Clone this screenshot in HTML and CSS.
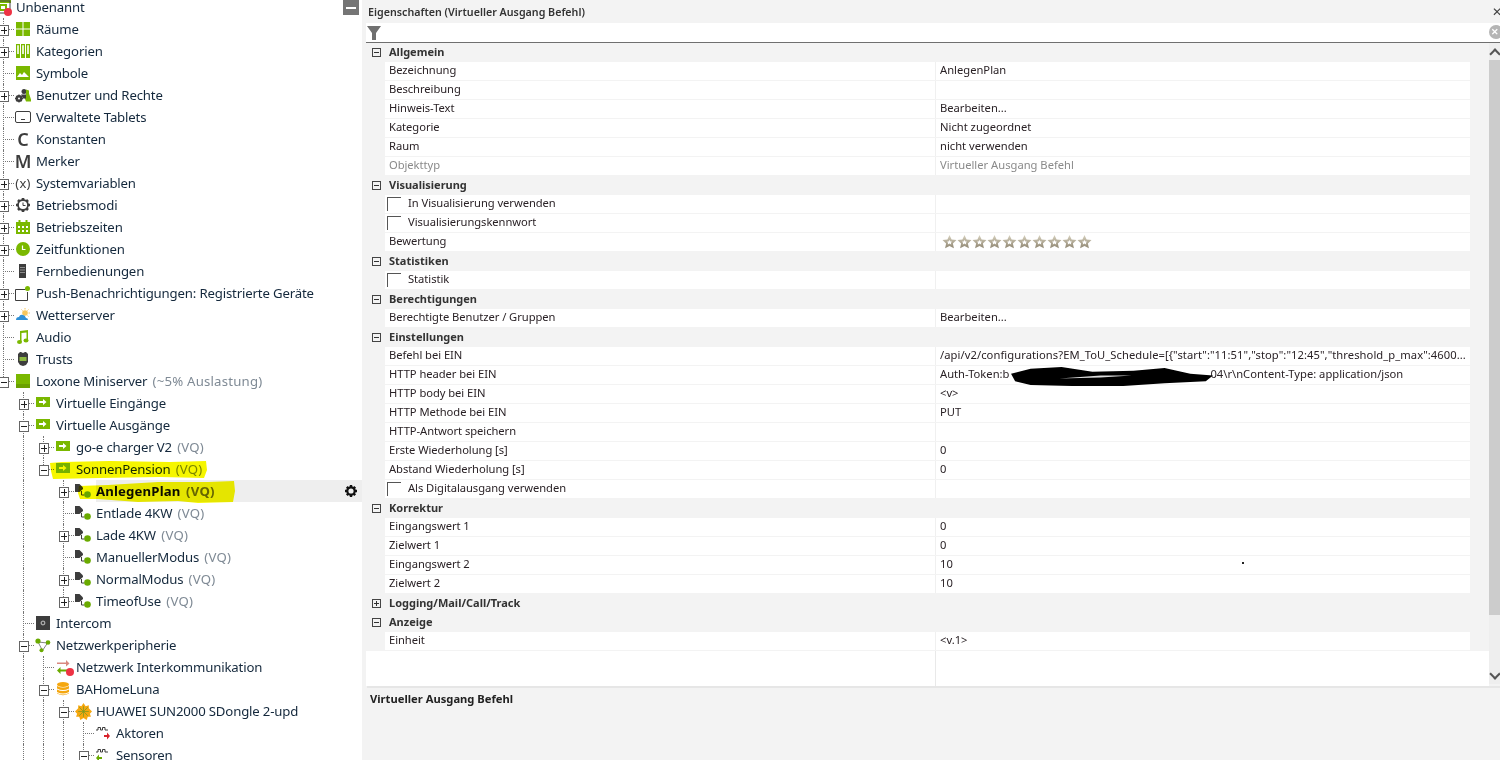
FILE: index.html
```html
<!DOCTYPE html>
<html lang="de">
<head>
<meta charset="utf-8">
<title>Eigenschaften</title>
<link rel="stylesheet" href="styles.css">
</head>
<body>
<svg class="sprites" width="0" height="0" aria-hidden="true">
  <defs><linearGradient id="star-fill" x1="0" y1="0" x2="0" y2="1"><stop offset="0" stop-color="#d8d2bf"/><stop offset="1" stop-color="#8f8672"/></linearGradient></defs>
  <symbol id="i-root" viewBox="0 0 14 14"><rect x="0" y="0" width="14" height="3" fill="#7ab800"/><rect x="1" y="1" width="12" height="12" fill="none" stroke="#444" stroke-width="1"/><rect x="3" y="5" width="6" height="5" fill="none" stroke="#7ab800" stroke-width="2"/></symbol>
  <symbol id="i-rooms" viewBox="0 0 14 14"><path fill="#7ab800" d="M0 0h6.500v6.500H0zM7.500 0H14v6.500H7.500zM0 7.500h6.500V14H0zM7.500 7.500H14V14H7.500z"/></symbol>
  <symbol id="i-cat" viewBox="0 0 14 14"><path fill="none" stroke="#7ab800" stroke-width="1.200" d="M.6.600h2.800v12.800H.6zM5.600.600h2.800v12.800H5.600zM10.600.600h2.800v12.800h-2.800z"/><path fill="#7ab800" d="M.6 10h2.800v3.400H.6zM5.600 10h2.800v3.400H5.600zM10.600 10h2.800v3.400h-2.800z"/></symbol>
  <symbol id="i-sym" viewBox="0 0 14 14"><rect width="14" height="14" fill="#7ab800"/><path fill="#fff" d="M1 11l3-4 2 2 2-3 2 2 3 3z"/></symbol>
  <symbol id="i-users" viewBox="0 0 16 14"><circle cx="9" cy="3" r="2.500" fill="#3d3d3d"/><path fill="#7ab800" d="M11 1l3 1v3l2 6v2h-5l-2-5 2-2z"/><path fill="#3d3d3d" d="M6 6h5v4H8z"/><circle cx="4" cy="10" r="2.600" fill="none" stroke="#3d3d3d" stroke-width="2"/><path stroke="#3d3d3d" stroke-width="1.200" d="M4 6v8M0 10h8M1.500 7.500l5 5M6.500 7.500l-5 5"/><circle cx="4" cy="10" r="1" fill="#fff"/></symbol>
  <symbol id="i-tablet" viewBox="0 0 16 12"><rect x=".5" y=".5" width="15" height="11" rx="1.500" fill="#fff" stroke="#3d3d3d"/><path stroke="#3d3d3d" d="M6 8.500h4"/></symbol>
  <symbol id="i-clockgear" viewBox="0 0 14 14"><path stroke="#3d3d3d" stroke-width="2.600" d="M7 0v14M0 7h14M2 2l10 10M12 2L2 12"/><circle cx="7" cy="7" r="5" fill="#fff" stroke="#3d3d3d" stroke-width="1.800"/><path fill="none" stroke="#3d3d3d" d="M7 4.500v3h2.500"/></symbol>
  <symbol id="i-cal" viewBox="0 0 14 14"><path fill="#7ab800" d="M0 2h14v12H0zM2.500 0h2v3h-2zM9.500 0h2v3h-2z"/><path fill="#fff" d="M2 6h2v2H2zM6 6h2v2H6zM10 6h2v2h-2zM2 10h2v2H2zM6 10h2v2H6zM10 10h2v2h-2z"/></symbol>
  <symbol id="i-clock" viewBox="0 0 14 14"><circle cx="7" cy="7" r="7" fill="#7ab800"/><path fill="none" stroke="#fff" stroke-width="1.200" d="M6.500 3.500v4h3"/></symbol>
  <symbol id="i-remote" viewBox="0 0 14 14"><rect x="3" y="0" width="7" height="14" fill="#3d3d3d"/><path fill="#ddd" d="M4.500 3h1v1h-1zM6.500 3h1v1h-1zM8.500 3h.5v1h-.5zM4.500 5.500h1v1h-1zM6.500 5.500h1v1h-1zM8.500 5.500h.5v1h-.5zM4.500 8h1v1h-1zM6.500 8h1v1h-1zM8.500 8h.5v1h-.5z"/></symbol>
  <symbol id="i-push" viewBox="0 0 16 15"><path fill="none" stroke="#3d3d3d" d="M.5 3.500h10M.5 3.500v11h12V6"/><circle cx="12.500" cy="2.500" r="2.500" fill="#7ab800"/></symbol>
  <symbol id="i-weather" viewBox="0 0 14 14"><circle cx="9" cy="5" r="2.800" fill="#f7c65b"/><path stroke="#f7c65b" d="M9 0v1.500M14 5h-1.500M12.500 1.500l-1 1M12.500 8.500l-1-1M5.500 1.500l1 1"/><path fill="#2f8fd6" d="M0 12q0-3 3-3 1-3 4-2 2 0 3 3 2 0 2 2z"/></symbol>
  <symbol id="i-audio" viewBox="0 0 14 14"><path fill="#7ab800" d="M4 1l8-1v10h-1.500V2.500L5.500 3v9H4z"/><ellipse cx="3.500" cy="12" rx="2.500" ry="2" fill="#7ab800"/><ellipse cx="10" cy="10.500" rx="2.500" ry="2" fill="#7ab800"/></symbol>
  <symbol id="i-trust" viewBox="0 0 14 14"><path fill="#3d3d3d" d="M2 2l2-2h1l2 1 2-1h1l2 2v8l-2 3-3 1-3-1-2-3z"/><rect x="3.500" y="5" width="7" height="4" fill="#8cb840"/></symbol>
  <symbol id="i-ms" viewBox="0 0 14 14"><rect width="14" height="14" fill="#7ab800"/><rect y="10" width="14" height="4" fill="#6aa000"/></symbol>
  <symbol id="i-vq" viewBox="0 0 14 10"><rect width="14" height="10" fill="#7ab800"/><path fill="#fff" d="M3 4h4V2l3.500 3L7 8V6H3z"/></symbol>
  <symbol id="i-cmd" viewBox="0 0 16 14"><path fill="#3d3d3d" d="M0 0h4.500L8 3.500V5L4.500 8H0z"/><path fill="none" stroke="#3d3d3d" d="M6.500 7v4h3"/><circle cx="12.500" cy="10.500" r="3.300" fill="#6aaa00"/></symbol>
  <symbol id="i-intercom" viewBox="0 0 14 14"><rect width="14" height="14" fill="#3d3d3d"/><circle cx="7" cy="7" r="1.800" fill="none" stroke="#aaa" stroke-width="1.300"/></symbol>
  <symbol id="i-net" viewBox="0 0 16 14"><path fill="none" stroke="#666" stroke-width=".8" d="M3 3.500l4.500 8.500 5-7.500z"/><circle cx="3" cy="2.500" r="2.600" fill="#6aaa00"/><circle cx="13" cy="4" r="2.300" fill="#6aaa00"/><circle cx="6.500" cy="11.800" r="2" fill="#6aaa00"/></symbol>
  <symbol id="i-inter" viewBox="0 0 14 14"><path fill="#d98880" d="M1 2.500h9V0l3.500 3.500L10 6.500V4H1z"/><path fill="#6aaa00" d="M13 9.500H4.500V7L1 10.500 4.500 14v-2.500H13z"/></symbol>
  <symbol id="i-db" viewBox="0 0 14 14"><ellipse cx="7" cy="2.500" rx="6" ry="2.500" fill="#f5a70f"/><path fill="#f5a70f" d="M1 4q6 3 12 0v2.500q-6 3-12 0zM1 7.500q6 3 12 0V10q-6 3-12 0zM1 11q6 3 12 0v.5q-6 3.500-12 0z"/></symbol>
  <symbol id="i-huawei" viewBox="0 0 16 16"><path fill="#f5a70f" d="M8 0l2 3 3-1 0 3 3 3-2 2 1 3-3 0-1 3-3-2-3 2-1-3-3 0 1-3-2-2 3-3 0-3 3 1z"/><path stroke="#7a9a20" stroke-width=".7" d="M4 4l8 8M12 4l-8 8M8 3v10M3 8h10"/></symbol>
  <symbol id="i-act" viewBox="0 0 14 14"><path fill="none" stroke="#3d3d3d" d="M0 4h2V1.500h2.500V4h2V1.500h2.500V4H12"/><path fill="#d8212a" d="M8 9h3V6.500L14 10l-3 3.500V11H8z"/></symbol>
  <symbol id="i-sen" viewBox="0 0 14 14"><path fill="none" stroke="#3d3d3d" d="M0 4h2V1.500h2.500V4h2V1.500h2.500V4H12"/><path fill="#6aaa00" d="M6 9H3V6.500L0 10l3 3.500V11h3z"/></symbol>
  <symbol id="i-dot" viewBox="0 0 10 10"><circle cx="5" cy="5" r="4" fill="#ee3344"/></symbol>
  <symbol id="i-gear" viewBox="0 0 14 14"><path stroke="#111" stroke-width="2.400" d="M7 1v12M1 7h12M2.800 2.800l8.400 8.400M11.200 2.800l-8.400 8.400"/><circle cx="7" cy="7" r="3.700" fill="#eee" stroke="#111" stroke-width="2.200"/></symbol>
  <symbol id="i-star" viewBox="0 0 14 14"><path fill="url(#star-fill)" fill-rule="evenodd" d="M7 0l2.100 4.500 4.900.6-3.600 3.300 1 4.900L7 10.900 2.600 13.300l1-4.900L0 5.100l4.900-.6zM7 5L6 6.500l-1.600.2 1.200 1.100-.3 1.600L7 8.600l1.700.8-.3-1.600 1.200-1.100L8 6.500z"/></symbol>
</svg>

<div class="app">
  <aside class="tree-pane">
    <button class="collapse" type="button" aria-label="Einklappen"></button>
    <div class="tree">
      <div class="row root"><span class="icon"><svg class="ic"><use href="#i-root"/></svg><svg class="dot root-dot"><use href="#i-dot"/></svg></span><span class="label">Unbenannt</span></div>

      <div class="row"><span class="ex plus cont"></span><span class="icon"><svg class="ic"><use href="#i-rooms"/></svg></span><span class="label">Räume</span></div>
      <div class="row"><span class="ex plus cont"></span><span class="icon"><svg class="ic"><use href="#i-cat"/></svg></span><span class="label">Kategorien</span></div>
      <div class="row"><span class="ex cont"></span><span class="icon"><svg class="ic"><use href="#i-sym"/></svg></span><span class="label">Symbole</span></div>
      <div class="row"><span class="ex plus cont"></span><span class="icon"><svg class="ic-net"><use href="#i-users"/></svg></span><span class="label">Benutzer und Rechte</span></div>
      <div class="row"><span class="ex cont"></span><span class="icon"><svg class="ic-wide"><use href="#i-tablet"/></svg></span><span class="label">Verwaltete Tablets</span></div>
      <div class="row"><span class="ex cont"></span><span class="icon glyph">C</span><span class="label">Konstanten</span></div>
      <div class="row"><span class="ex cont"></span><span class="icon glyph">M</span><span class="label">Merker</span></div>
      <div class="row"><span class="ex plus cont"></span><span class="icon glyph-x">(x)</span><span class="label">Systemvariablen</span></div>
      <div class="row"><span class="ex plus cont"></span><span class="icon"><svg class="ic"><use href="#i-clockgear"/></svg></span><span class="label">Betriebsmodi</span></div>
      <div class="row"><span class="ex plus cont"></span><span class="icon"><svg class="ic"><use href="#i-cal"/></svg></span><span class="label">Betriebszeiten</span></div>
      <div class="row"><span class="ex plus cont"></span><span class="icon"><svg class="ic"><use href="#i-clock"/></svg></span><span class="label">Zeitfunktionen</span></div>
      <div class="row"><span class="ex cont"></span><span class="icon"><svg class="ic"><use href="#i-remote"/></svg></span><span class="label">Fernbedienungen</span></div>
      <div class="row"><span class="ex plus cont"></span><span class="icon"><svg class="ic-net"><use href="#i-push"/></svg></span><span class="label">Push-Benachrichtigungen: Registrierte Geräte</span></div>
      <div class="row"><span class="ex plus cont"></span><span class="icon"><svg class="ic"><use href="#i-weather"/></svg></span><span class="label">Wetterserver</span></div>
      <div class="row"><span class="ex cont"></span><span class="icon"><svg class="ic"><use href="#i-audio"/></svg></span><span class="label">Audio</span></div>
      <div class="row"><span class="ex cont"></span><span class="icon"><svg class="ic"><use href="#i-trust"/></svg></span><span class="label">Trusts</span></div>
      <div class="row"><span class="ex minus end"></span><span class="icon"><svg class="ic"><use href="#i-ms"/></svg></span><span class="label">Loxone Miniserver <em>(~5% Auslastung)</em></span></div>

      <div class="row"><span class="gap"></span><span class="ex plus cont"></span><span class="icon"><svg class="ic-vq"><use href="#i-vq"/></svg></span><span class="label">Virtuelle Eingänge</span></div>
      <div class="row"><span class="gap"></span><span class="ex minus cont"></span><span class="icon"><svg class="ic-vq"><use href="#i-vq"/></svg></span><span class="label">Virtuelle Ausgänge</span></div>
      <div class="row"><span class="gap"></span><span class="guide"></span><span class="ex plus cont"></span><span class="icon"><svg class="ic-vq"><use href="#i-vq"/></svg></span><span class="label">go-e charger V2 <em>(VQ)</em></span></div>
      <div class="row"><span class="gap"></span><span class="guide"></span><span class="ex minus end"></span><span class="icon"><svg class="ic-vq"><use href="#i-vq"/></svg></span><span class="label">SonnenPension <em>(VQ)</em></span></div>

      <div class="row selected"><span class="gap"></span><span class="guide"></span><span class="gap"></span><span class="ex plus cont"></span><span class="icon"><svg class="ic-cmd"><use href="#i-cmd"/></svg></span><span class="label"><strong>AnlegenPlan <em>(VQ)</em></strong></span><svg class="gear"><use href="#i-gear"/></svg></div>
      <div class="row"><span class="gap"></span><span class="guide"></span><span class="gap"></span><span class="ex cont"></span><span class="icon"><svg class="ic-cmd"><use href="#i-cmd"/></svg></span><span class="label">Entlade 4KW <em>(VQ)</em></span></div>
      <div class="row"><span class="gap"></span><span class="guide"></span><span class="gap"></span><span class="ex plus cont"></span><span class="icon"><svg class="ic-cmd"><use href="#i-cmd"/></svg></span><span class="label">Lade 4KW <em>(VQ)</em></span></div>
      <div class="row"><span class="gap"></span><span class="guide"></span><span class="gap"></span><span class="ex cont"></span><span class="icon"><svg class="ic-cmd"><use href="#i-cmd"/></svg></span><span class="label">ManuellerModus <em>(VQ)</em></span></div>
      <div class="row"><span class="gap"></span><span class="guide"></span><span class="gap"></span><span class="ex plus cont"></span><span class="icon"><svg class="ic-cmd"><use href="#i-cmd"/></svg></span><span class="label">NormalModus <em>(VQ)</em></span></div>
      <div class="row"><span class="gap"></span><span class="guide"></span><span class="gap"></span><span class="ex plus end"></span><span class="icon"><svg class="ic-cmd"><use href="#i-cmd"/></svg></span><span class="label">TimeofUse <em>(VQ)</em></span></div>

      <div class="row"><span class="gap"></span><span class="ex cont"></span><span class="icon"><svg class="ic"><use href="#i-intercom"/></svg></span><span class="label">Intercom</span></div>
      <div class="row"><span class="gap"></span><span class="ex minus cont"></span><span class="icon"><svg class="ic-net"><use href="#i-net"/></svg></span><span class="label">Netzwerkperipherie</span></div>
      <div class="row"><span class="gap"></span><span class="guide"></span><span class="ex cont"></span><span class="icon"><svg class="ic"><use href="#i-inter"/></svg><svg class="dot inter-dot"><use href="#i-dot"/></svg></span><span class="label">Netzwerk Interkommunikation</span></div>
      <div class="row"><span class="gap"></span><span class="guide"></span><span class="ex minus cont"></span><span class="icon"><svg class="ic"><use href="#i-db"/></svg></span><span class="label">BAHomeLuna</span></div>
      <div class="row"><span class="gap"></span><span class="guide"></span><span class="guide"></span><span class="ex minus cont"></span><span class="icon"><svg class="ic-big"><use href="#i-huawei"/></svg></span><span class="label">HUAWEI SUN2000 SDongle 2-upd</span></div>
      <div class="row"><span class="gap"></span><span class="guide"></span><span class="guide"></span><span class="guide"></span><span class="ex cont"></span><span class="icon"><svg class="ic"><use href="#i-act"/></svg></span><span class="label">Aktoren</span></div>
      <div class="row"><span class="gap"></span><span class="guide"></span><span class="guide"></span><span class="guide"></span><span class="ex minus cont"></span><span class="icon"><svg class="ic"><use href="#i-sen"/></svg></span><span class="label">Sensoren</span></div>

      <svg class="marker marker-a" viewBox="0 0 158 18" preserveAspectRatio="none"><path d="M0 2L12 1 60 0 120 1 156 0 157 9 154 17 110 16 50 17 3 18 1 10z"/></svg>
      <svg class="marker marker-b" viewBox="0 0 157 22" preserveAspectRatio="none"><path d="M1 5L30 4 80 1 130 1 156 0 157 10 155 21 120 22 100 20 60 21 20 18 2 18 0 12z"/></svg>
    </div>
  </aside>

  <main class="props">
    <header class="props-head"><span class="props-title">Eigenschaften (Virtueller Ausgang Befehl)</span><span class="close">✕</span></header>
    <div class="filter">
      <svg class="funnel" viewBox="0 0 14 14"><path fill="#6f6f6f" d="M0 0h14L9 7v7H5V7z"/></svg>
      <span class="clear"></span>
    </div>
    <div class="grid-wrap">
      <div class="grid">
        <div class="sec"><span class="tog minus"></span>Allgemein</div>
        <div class="prop"><span class="k">Bezeichnung</span><span class="v">AnlegenPlan</span></div>
        <div class="prop"><span class="k">Beschreibung</span><span class="v"></span></div>
        <div class="prop"><span class="k">Hinweis-Text</span><span class="v">Bearbeiten...</span></div>
        <div class="prop"><span class="k">Kategorie</span><span class="v">Nicht zugeordnet</span></div>
        <div class="prop"><span class="k">Raum</span><span class="v">nicht verwenden</span></div>
        <div class="prop off"><span class="k">Objekttyp</span><span class="v">Virtueller Ausgang Befehl</span></div>
        <div class="sec"><span class="tog minus"></span>Visualisierung</div>
        <div class="prop"><span class="k chk"><span class="box"></span>In Visualisierung verwenden</span><span class="v"></span></div>
        <div class="prop"><span class="k chk"><span class="box"></span>Visualisierungskennwort</span><span class="v"></span></div>
        <div class="prop"><span class="k">Bewertung</span><span class="v stars"><svg class="star"><use href="#i-star"/></svg><svg class="star"><use href="#i-star"/></svg><svg class="star"><use href="#i-star"/></svg><svg class="star"><use href="#i-star"/></svg><svg class="star"><use href="#i-star"/></svg><svg class="star"><use href="#i-star"/></svg><svg class="star"><use href="#i-star"/></svg><svg class="star"><use href="#i-star"/></svg><svg class="star"><use href="#i-star"/></svg><svg class="star"><use href="#i-star"/></svg></span></div>
        <div class="sec"><span class="tog minus"></span>Statistiken</div>
        <div class="prop"><span class="k chk"><span class="box"></span>Statistik</span><span class="v"></span></div>
        <div class="sec"><span class="tog minus"></span>Berechtigungen</div>
        <div class="prop"><span class="k">Berechtigte Benutzer / Gruppen</span><span class="v">Bearbeiten...</span></div>
        <div class="sec"><span class="tog minus"></span>Einstellungen</div>
        <div class="prop"><span class="k">Befehl bei EIN</span><span class="v cmd">/api/v2/configurations?EM_ToU_Schedule=[{"start":"11:51","stop":"12:45","threshold_p_max":4600...</span></div>
        <div class="prop"><span class="k">HTTP header bei EIN</span><span class="v token">Auth-Token:b<span class="redacted"></span>04\r\nContent-Type: application/json<svg class="scribble" viewBox="0 0 198 22" preserveAspectRatio="none"><path fill="#000" d="M1 8L20 3 50 1 80 6 120 5 150 2 175 8 197 10 190 16 150 18 110 21 60 21 20 20 5 16z"/><path fill="#ddd" d="M48 13l40-3 30 0-30 2z"/></svg></span></div>
        <div class="prop"><span class="k">HTTP body bei EIN</span><span class="v">&lt;v&gt;</span></div>
        <div class="prop"><span class="k">HTTP Methode bei EIN</span><span class="v">PUT</span></div>
        <div class="prop"><span class="k">HTTP-Antwort speichern</span><span class="v"></span></div>
        <div class="prop"><span class="k">Erste Wiederholung [s]</span><span class="v">0</span></div>
        <div class="prop"><span class="k">Abstand Wiederholung [s]</span><span class="v">0</span></div>
        <div class="prop"><span class="k chk"><span class="box"></span>Als Digitalausgang verwenden</span><span class="v"></span></div>
        <div class="sec"><span class="tog minus"></span>Korrektur</div>
        <div class="prop"><span class="k">Eingangswert 1</span><span class="v">0</span></div>
        <div class="prop"><span class="k">Zielwert 1</span><span class="v">0</span></div>
        <div class="prop"><span class="k">Eingangswert 2</span><span class="v speck">10</span></div>
        <div class="prop"><span class="k">Zielwert 2</span><span class="v">10</span></div>
        <div class="sec"><span class="tog plus"></span>Logging/Mail/Call/Track</div>
        <div class="sec"><span class="tog minus"></span>Anzeige</div>
        <div class="prop"><span class="k">Einheit</span><span class="v">&lt;v.1&gt;</span></div>
        <div class="filler"></div>
      </div>
      <div class="scrollbar">
        <span class="chev up"></span>
        <span class="thumb"></span>
        <span class="chev down"></span>
      </div>
    </div>
    <footer class="desc">Virtueller Ausgang Befehl</footer>
  </main>
</div>
</body>
</html>
```

FILE: styles.css
```css
* { box-sizing: border-box; }
html, body { margin: 0; height: 100%; overflow: hidden; }
body { background: #f3f3f3; color: #1b2733; font-family: "Noto Sans", "Open Sans", sans-serif; }
.sprites { position: absolute; }
.app { display: flex; height: 760px; }

/* Left tree */
.tree-pane { width: 362px; flex: none; background: #fff; position: relative; overflow: hidden; }
.collapse { position: absolute; top: 0; right: 3px; width: 16px; height: 15px; padding: 0; border: 0; background: #757575; z-index: 3; }
.collapse::after { content: ""; display: block; width: 10px; height: 2px; margin: 0 auto; background: #fff; }
.tree { position: relative; margin-left: -7px; width: 369px; }
.row { display: flex; align-items: center; height: 22px; font-size: 13.2px; white-space: nowrap; position: relative; }
.gap, .guide { flex: none; width: 20px; height: 22px; position: relative; }
.ex { flex: none; width: 22px; height: 22px; position: relative; background-image: repeating-linear-gradient(90deg, #777 0 1px, transparent 1px 2px); background-size: 12px 1px; background-position: 10px 11px; background-repeat: no-repeat; }
.guide::before, .ex::before { content: ""; position: absolute; left: 10px; top: 0; height: 22px; border-left: 1px dotted #777; }
.ex.end::before { height: 11px; }
.ex.plus::after, .ex.minus::after { content: ""; position: absolute; left: 6px; top: 7px; width: 8px; height: 9px; border: 1px solid #666; background: linear-gradient(#222, #222) center / 6px 1px no-repeat, #fff; }
.ex.plus::after { background: linear-gradient(#222, #222) center / 6px 1px no-repeat, linear-gradient(#222, #222) center / 1px 7px no-repeat, #fff; }
.icon { flex: none; width: 16px; height: 22px; display: flex; align-items: center; justify-content: center; position: relative; }
.ic { width: 14px; height: 14px; display: block; flex: none; }
.ic-wide { width: 16px; height: 12px; display: block; flex: none; }
.ic-vq { width: 14px; height: 10px; display: block; flex: none; position: relative; top: -1px; }
.ic-cmd { width: 16px; height: 14px; display: block; flex: none; }
.ic-net { width: 16px; height: 15px; display: block; flex: none; }
.ic-big { width: 17px; height: 17px; display: block; flex: none; }
.glyph { font-size: 18px; line-height: 16px; color: #3d3d3d; font-weight: 600; }
.glyph-x { font-size: 13px; color: #3d3d3d; letter-spacing: .3px; }
.label { margin-left: 5px; color: #14283c; letter-spacing: -.16px; line-height: 14px; }
.label em { font-style: normal; color: #7f8a95; margin-left: 2px; letter-spacing: .2px; }
.label strong { font-weight: 700; color: #0b0b0b; letter-spacing: .15px; }
.label strong em { color: #6a6a00; font-weight: 700; letter-spacing: .2px; }
.dot { width: 10px; height: 10px; position: absolute; }
.root { height: 18px; align-items: flex-start; padding-left: 3px; }
.root .icon { height: 14px; }
.root .label { margin-left: 4px; }
.root-dot { left: 7px; top: 7px; }
.inter-dot { left: 10px; top: 11px; }
.selected::after { content: ""; position: absolute; left: 103px; right: 0; top: 0; bottom: 0; background: #eee; z-index: 0; }
.selected > * { z-index: 1; }
.gear { position: absolute; right: 4px; top: 4px; width: 14px; height: 14px; }
.marker { position: absolute; z-index: 2; mix-blend-mode: multiply; fill: #f6f600; }
.marker-a { left: 57px; top: 461px; width: 158px; height: 18px; }
.marker-b { left: 85px; top: 481px; width: 157px; height: 22px; }

/* Right property panel */
.props { flex: 1; margin-left: 4px; display: flex; flex-direction: column; min-width: 0; }
.props-head { height: 23px; display: flex; align-items: center; justify-content: space-between; padding-left: 2px; }
.props-title { font-size: 10.7px; font-weight: 600; color: #333; }
.close { font-size: 12px; line-height: 12px; color: #444; margin-right: -2px; }
.filter { height: 19px; background: #fff; position: relative; padding-left: 1px; display: flex; align-items: center; overflow: hidden; }
.funnel { width: 14px; height: 14px; }
.clear { position: absolute; right: -3px; top: 2px; width: 14px; height: 14px; border-radius: 50%; background: #b5b5b5; }
.clear::after { content: "✕"; position: absolute; left: 2px; top: 0; font-size: 9px; line-height: 14px; color: #fff; font-weight: 700; }
.grid-wrap { height: 644px; border-top: 1px solid #6f6f6f; display: flex; }
.grid { width: 1123px; display: flex; flex-direction: column; background: #f3f3f3; }
.sec { flex: none; height: 19px; display: flex; align-items: center; padding: 0 0 2px 23px; font-size: 11px; font-weight: 700; color: #333; position: relative; }
.tog { position: absolute; left: 6px; top: 5px; width: 9px; height: 9px; border: 1px solid #444; background: linear-gradient(#333, #333) center / 5px 1px no-repeat; }
.tog.plus { background: linear-gradient(#333, #333) center / 5px 1px no-repeat, linear-gradient(#333, #333) center / 1px 5px no-repeat; }
.prop { flex: none; height: 19px; margin-left: 19px; width: 1085px; display: flex; background: #fff; border-bottom: 1px solid #f3f3f3; font-size: 11.2px; color: #2a2226; line-height: 15px; }
.k { width: 551px; flex: none; padding-left: 4px; border-right: 1px solid #f0f0f0; white-space: nowrap; letter-spacing: -.05px; }
.v { flex: 1; padding-left: 4px; white-space: nowrap; position: relative; min-width: 0; }
.cmd { letter-spacing: .065px; }
.off .k, .off .v { color: #8a8a8a; }
.chk { display: flex; align-items: center; padding-left: 2px; padding-bottom: 3px; }
.box { width: 14px; height: 14px; margin-right: 7px; border-left: 1px solid #555; border-top: 1px solid #555; position: relative; top: 1px; }
.stars { display: flex; align-items: center; padding-left: 6px; }
.star { width: 15px; height: 14px; flex: none; }
.token { position: relative; }
.redacted { display: inline-block; width: 201px; }
.scribble { position: absolute; left: 74px; top: 0; width: 204px; height: 21px; }
.speck::after { content: ""; position: absolute; left: 306px; top: 6px; width: 2px; height: 2px; background: #222; }
.filler { flex: 1; background: linear-gradient(#e9e9e9, #e9e9e9) 569px 0 / 1px 100% no-repeat, #fff; }
.scrollbar { width: 11px; background: #eee; display: flex; flex-direction: column; margin-left: auto; height: 641px; }
.thumb { height: 555px; background: #ccc; flex: none; }
.chev { height: 17px; flex: none; position: relative; }
.chev::after { content: ""; position: absolute; left: 2px; width: 6px; height: 6px; border-left: 2px solid #555; border-top: 2px solid #555; }
.chev.up::after { top: 7px; transform: rotate(45deg); }
.chev.down { margin-top: 52px; }
.chev.down::after { top: 3px; transform: rotate(225deg); }
.desc { flex: 1; margin-left: 1px; border-top: 2px solid #e6e6e6; padding: 3px 3px; font-size: 11.2px; font-weight: 700; color: #222; }
```
